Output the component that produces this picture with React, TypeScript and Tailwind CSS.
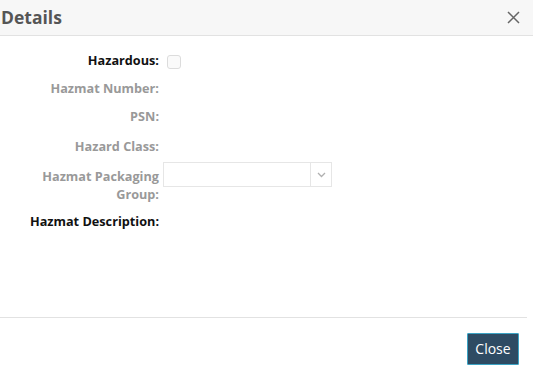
import React from "react";

function Row({
  label,
  labelClass,
  rowClass,
  children,
}: {
  label: React.ReactNode;
  labelClass: string;
  rowClass: string;
  children?: React.ReactNode;
}) {
  return (
    <div className={rowClass}>
      <div className={labelClass}>{label}</div>
      <div>{children}</div>
    </div>
  );
}

const dark = "text-right text-[12.7px] font-bold leading-[18px] text-[#111]";
const gray = "text-right text-[12.7px] font-bold leading-[18px] text-[#999]";

export default function App() {
  return (
    <div className="w-[533px] h-[379px] bg-white" style={{ fontFamily: '"Open Sans", sans-serif' }}>
      <div className="h-[36px] bg-[#f7f7f7] border-b border-[#e2e2e2] flex items-center justify-between pl-[1px] pr-[13px]">
        <div className="text-[17.5px] font-bold text-[#555] leading-none">Details</div>
        <svg width="13" height="13" viewBox="0 0 13 13" className="text-[#666]">
          <path d="M1 1 L12 12 M12 1 L1 12" stroke="currentColor" strokeWidth="1.5" />
        </svg>
      </div>
      <div className="h-[281px] pt-[15px] flex flex-col">
        <Row rowClass="grid grid-cols-[159px_auto] gap-x-[4px] h-[18px]" labelClass={dark} label="Hazardous:">
          <div className="ml-[4px] mt-[4px] w-[14px] h-[14px] rounded-[3px] border border-[#dcdcdc] bg-[#fafafa]" />
        </Row>
        <Row rowClass="grid grid-cols-[159px_auto] gap-x-[4px] h-[18px] mt-[10px]" labelClass={gray} label="Hazmat Number:" />
        <Row rowClass="grid grid-cols-[159px_auto] gap-x-[4px] h-[18px] mt-[10px]" labelClass={gray} label="PSN:" />
        <Row rowClass="grid grid-cols-[159px_auto] gap-x-[4px] h-[18px] mt-[12px]" labelClass={gray} label="Hazard Class:" />
        <Row
          rowClass="grid grid-cols-[159px_auto] gap-x-[4px] mt-[7px]"
          labelClass={gray + " pt-[5px]"}
          label={
            <>
              Hazmat Packaging
              <br />
              Group:
            </>
          }
        >
          <div className="w-[169px] h-[25px] border border-[#e6e6e6] flex">
            <div className="flex-1" />
            <div className="w-[21px] border-l border-[#e6e6e6] flex items-center justify-center">
              <svg width="9" height="6" viewBox="0 0 9 6">
                <path d="M1 1 L4.5 4.5 L8 1" fill="none" stroke="#b0b0b0" strokeWidth="1.3" />
              </svg>
            </div>
          </div>
        </Row>
        <Row rowClass="grid grid-cols-[159px_auto] gap-x-[4px] h-[18px] mt-[9px]" labelClass={dark} label="Hazmat Description:" />
      </div>
      <div className="w-[527px] border-t border-[#e2e2e2]" />
      <div className="flex justify-end pr-[14px] pt-[15px]">
        <button className="w-[52px] h-[32px] bg-[#2e4b63] border border-[#3ba3c4] text-white text-[14px] leading-none rounded-[1px]">
          Close
        </button>
      </div>
    </div>
  );
}
